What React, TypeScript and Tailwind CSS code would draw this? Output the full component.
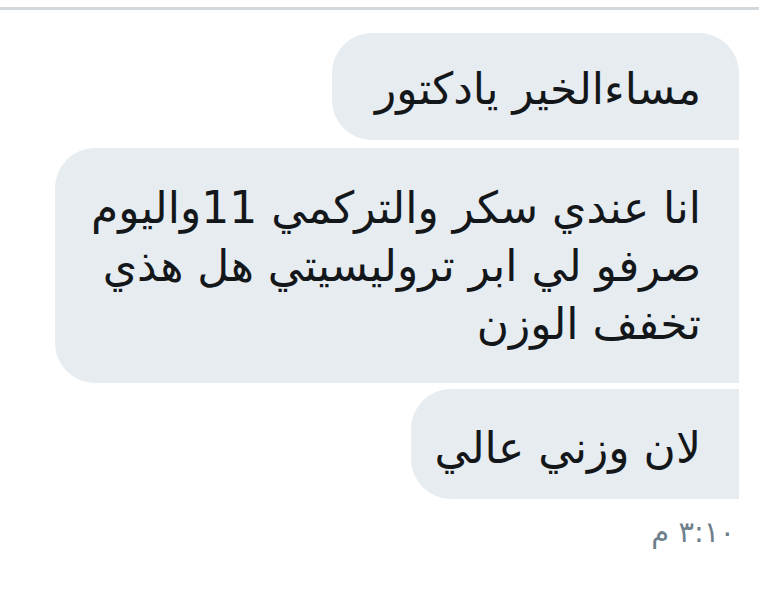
import React from "react";

const arabic = { fontFamily: '"DejaVu Sans", "Noto Sans", sans-serif' };

const App = () => {
  return (
    <div className="w-[759px] h-[591px] bg-white overflow-hidden" style={arabic}>
      <div className="mt-[7px] h-[3px] w-full bg-[#d3d8dc]" />
      <div dir="rtl" className="flex flex-col items-start pr-[20px] pt-[23px]">
        <div className="w-[407px] rounded-tr-[40px] rounded-tl-[40px] rounded-bl-[40px] bg-[#e6ecf0] pr-[38px] pl-[16px] pt-[26px] pb-[21px] text-[44px] leading-[60px] text-[#14171a]">
          مساءالخير يادكتور
        </div>
        <div className="mt-[8px] w-[684px] rounded-tl-[40px] rounded-bl-[40px] bg-[#e6ecf0] pr-[38px] pl-[16px] pt-[31px] pb-[30px] text-[44px] leading-[58px] text-[#14171a]">
          انا عندي سكر والتركمي 11واليوم
          <br />
          صرفو لي ابر تروليسيتي هل هذي
          <br />
          تخفف الوزن
        </div>
        <div className="mt-[6px] w-[328px] rounded-tl-[40px] rounded-bl-[40px] bg-[#e6ecf0] pr-[38px] pl-[16px] pt-[29px] pb-[21px] text-[44px] leading-[60px] text-[#14171a]">
          لان وزني عالي
        </div>
        <div className="mt-[15px] pr-[4px] text-[29px] leading-[36px] text-[#6f7f8c]">
          ٣:١٠ م
        </div>
      </div>
    </div>
  );
};

export default App;
